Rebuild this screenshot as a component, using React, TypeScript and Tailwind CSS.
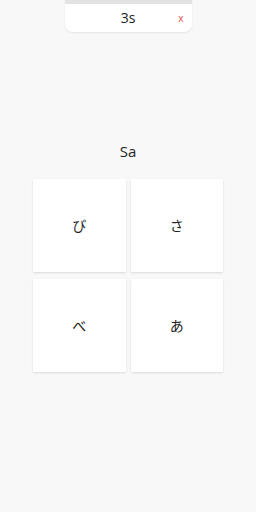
const CHOICES = ['び', 'さ', 'べ', 'あ'];

export default function App() {
  return (
    <div
      className="w-[256px] h-[512px] bg-[#f8f8f8] flex flex-col items-center"
      style={{ fontFamily: '"Open Sans", "Noto Sans CJK JP", sans-serif' }}
    >
      {/* Timer */}
      <div className="w-[127px] h-[32px] bg-white rounded-b-lg shadow-[0_1px_2px_rgba(0,0,0,0.08)] flex flex-col overflow-hidden">
        <div className="h-[4px] bg-[#e3e3e3]" />
        <div className="relative flex-1 flex items-center justify-center">
          <span className="text-[14px] text-[#222] leading-none">3s</span>
          <span className="absolute right-[8px] top-[9px] text-[10px] leading-none text-[#e05050]">x</span>
        </div>
      </div>

      <p className="mt-[112px] text-[15px] leading-none text-[#222]">Sa</p>

      <div className="mt-[20px] grid grid-cols-2 gap-x-[5px] gap-y-[7px] w-[190px]">
        {CHOICES.map((c) => (
          <button
            key={c}
            className="h-[93px] bg-white shadow-[0_1px_2px_rgba(0,0,0,0.12)] flex items-center justify-center text-[14px] text-[#222]"
          >
            {c}
          </button>
        ))}
      </div>
    </div>
  );
}
